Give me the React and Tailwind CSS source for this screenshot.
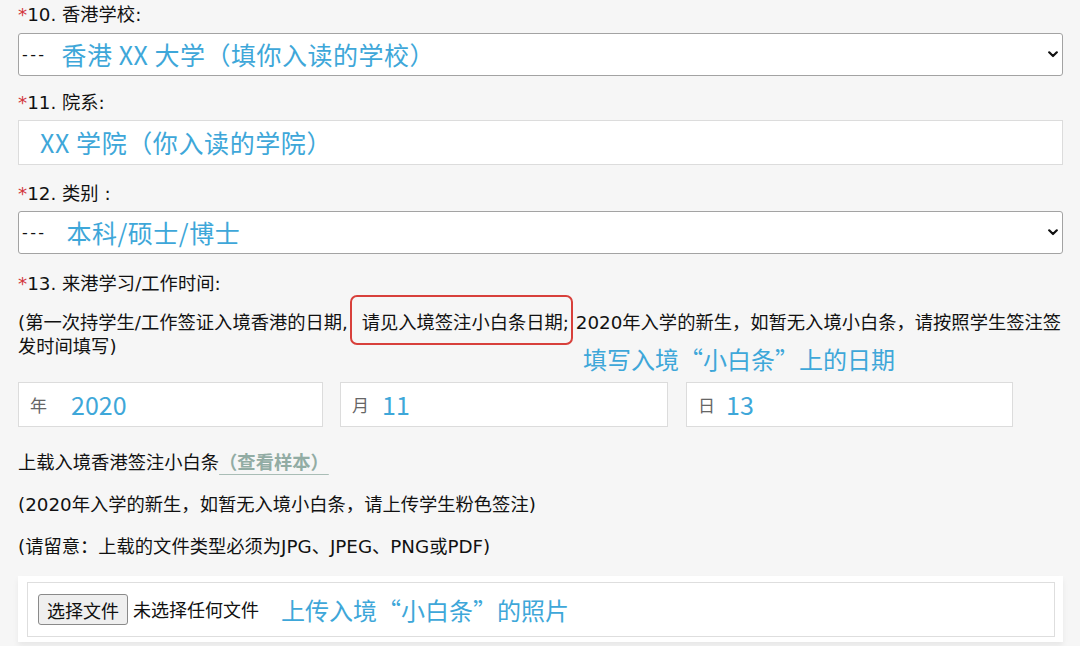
import React from "react";

// small bold chevron used by the native-looking selects
const Chevron = () => (
  <svg width="10" height="7" viewBox="0 0 10 7" className="shrink-0">
    <path d="M1.2 1.3 L5 5 L8.8 1.3" fill="none" stroke="#111" strokeWidth="2.2" strokeLinecap="round" strokeLinejoin="round" />
  </svg>
);

const Label = ({ num, text, className = "" }) => (
  <div className={`h-[26px] leading-[26px] whitespace-nowrap ${className}`}>
    <span className="text-[#d2343c]">*</span>
    {num} {text}
  </div>
);

const SelectBox = ({ value, gap, className = "" }) => (
  <div className={`flex h-[43px] items-center rounded-[3px] border border-[#a3a3a3] bg-white pl-[3px] pr-[4px] ${className}`}>
    <span className="text-[16px] tracking-[2.4px] text-[#111]">---</span>
    <span className={`${gap} whitespace-pre text-[25px] leading-none tracking-[0.5px] text-[#3ea7d9] font-['Noto_Sans_CJK_SC',sans-serif]`}>{value}</span>
    <div className="flex-1" />
    <Chevron />
  </div>
);

const DateBox = ({ unit, value, width, gap, className = "" }) => (
  <div className={`flex h-[45px] items-center border border-[#dcdcdc] bg-white pl-[11px] ${width} ${className}`}>
    <span className="text-[17px] text-[#666] font-['Noto_Sans_CJK_SC',sans-serif]">{unit}</span>
    <span className={`${gap} text-[25px] leading-none text-[#3ea7d9] font-['Noto_Sans_CJK_SC',sans-serif]`}>{value}</span>
  </div>
);

export default function App() {
  return (
    <div className="min-h-screen bg-[#f6f6f6] pl-[18px] pr-[17px] pt-[2px] text-[18.3px] text-[#111] font-['DejaVu_Sans','Noto_Sans_CJK_SC',sans-serif]">
      <Label num="10." text="香港学校:" />
      <SelectBox className="mt-[5px]" gap="ml-[15px]" value="香港 XX 大学（填你入读的学校）" />

      <Label className="mt-[14px]" num="11." text="院系:" />
      <div className="mt-[4px] flex h-[45px] items-center border border-[#dcdcdc] bg-white pl-[21px]">
        <span className="text-[25px] leading-none tracking-[0.6px] text-[#3ea7d9] font-['Noto_Sans_CJK_SC',sans-serif]">XX 学院（你入读的学院）</span>
      </div>

      <Label className="mt-[16px]" num="12." text="类别 :" />
      <SelectBox className="mt-[4px]" gap="ml-[20px]" value="本科/硕士/博士" />

      <Label className="mt-[17px]" num="13." text="来港学习/工作时间:" />

      <div className="relative mt-[14px] leading-[24px]">
        <div className="whitespace-nowrap">
          (第一次持学生/工作签证入境香港的日期,{" "}
          <span className="relative ml-[8px] mr-[1px]">
            请见入境签注小白条日期;
            <span className="absolute -left-[12px] -right-[4px] -top-[17px] -bottom-[12px] rounded-[7px] border-[2.5px] border-[#d8403b]" />
          </span>{" "}
          2020年入学的新生，如暂无入境小白条，请按照学生签注签
        </div>
        <div>发时间填写)</div>
        <div className="absolute left-[565px] top-[32px] whitespace-nowrap text-[24px] leading-[32px] text-[#3ea7d9] font-['Noto_Sans_CJK_SC',sans-serif]">
          填写入境“小白条”上的日期
        </div>
      </div>

      <div className="mt-[23px] flex">
        <DateBox unit="年" value="2020" width="w-[305px]" gap="ml-[24px]" />
        <DateBox unit="月" value="11" width="w-[328px]" gap="ml-[13px]" className="ml-[17px]" />
        <DateBox unit="日" value="13" width="w-[327px]" gap="ml-[11px]" className="ml-[18px]" />
      </div>

      <div className="mt-[23px] leading-[26px] whitespace-nowrap">
        上载入境香港签注小白条
        <span className="font-semibold text-[#92aca4] underline decoration-[#a9bdb6] underline-offset-[5px] decoration-1">（查看样本）</span>
      </div>
      <div className="mt-[16px] leading-[26px]">(2020年入学的新生，如暂无入境小白条，请上传学生粉色签注)</div>
      <div className="mt-[16px] leading-[26px]">(请留意：上载的文件类型必须为JPG、JPEG、PNG或PDF)</div>

      <div className="mt-[16px] bg-white pb-[5px] pl-[9px] pr-[8px] pt-[6px] shadow-[0_4px_6px_rgba(0,0,0,0.06)]">
        <div className="flex h-[55px] items-center border border-[#dedede] pl-[10px]">
          <button className="h-[31px] rounded-[3px] border border-[#8a8a8a] bg-[#efefef] px-[8px] text-[18px] leading-none text-[#111] font-['Noto_Sans_CJK_SC',sans-serif]">
            选择文件
          </button>
          <span className="ml-[5px] text-[18px] font-['Noto_Sans_CJK_SC',sans-serif]">未选择任何文件</span>
          <span className="ml-[22px] text-[24px] leading-none text-[#3ea7d9] font-['Noto_Sans_CJK_SC',sans-serif]">上传入境“小白条”的照片</span>
        </div>
      </div>
    </div>
  );
}
